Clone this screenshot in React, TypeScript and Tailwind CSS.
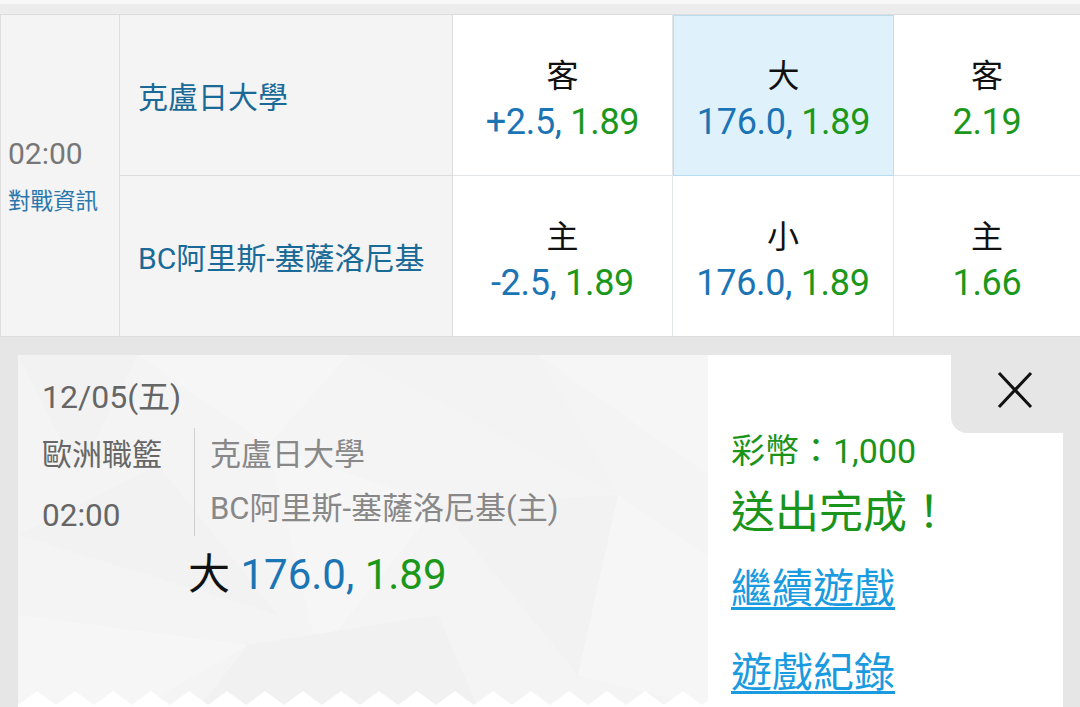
import React from "react";

const font = "font-['Roboto','Noto_Sans_CJK_TC',sans-serif]";

type Odd = { label: string; line?: string; price: string; active?: boolean };

const rows: { team: string; odds: Odd[] }[] = [
  {
    team: "克盧日大學",
    odds: [
      { label: "客", line: "+2.5,", price: "1.89" },
      { label: "大", line: "176.0,", price: "1.89", active: true },
      { label: "客", price: "2.19" },
    ],
  },
  {
    team: "BC阿里斯-塞薩洛尼基",
    odds: [
      { label: "主", line: "-2.5,", price: "1.89" },
      { label: "小", line: "176.0,", price: "1.89" },
      { label: "主", price: "1.66" },
    ],
  },
];

const OddCell: React.FC<{ odd: Odd; last: boolean; bottom: boolean }> = ({ odd, last, bottom }) => (
  <div
    className={`flex flex-col items-center justify-center pt-[9px] gap-[4px] ${
      odd.active ? "bg-[#dff2fc] border border-[#b9dcee]" : "bg-white"
    } ${!odd.active && !last ? "border-r border-[#e2e6e9]" : ""} ${
      !odd.active && bottom ? "border-b border-[#e2e6e9]" : ""
    }`}
  >
    <p className="text-[32px] leading-[40px] text-[#111]">{odd.label}</p>
    <p className="text-[36px] leading-[44px] tracking-[-0.3px]">
      {odd.line && <span className="text-[#1b74b4]">{odd.line} </span>}
      <span className="text-[#1b981b]">{odd.price}</span>
    </p>
  </div>
);

const Pattern = () => (
  <svg className="absolute inset-0 w-full h-full" viewBox="0 0 690 353" preserveAspectRatio="none">
    <polygon points="0,0 120,0 60,120" fill="#f2f2f2" />
    <polygon points="120,0 330,0 250,90" fill="#f6f6f6" />
    <polygon points="330,0 520,0 600,140" fill="#f3f3f3" />
    <polygon points="520,0 690,0 690,120" fill="#f6f6f6" />
    <polygon points="0,180 140,110 260,260" fill="#f2f2f2" />
    <polygon points="250,90 420,150 300,300" fill="#f6f6f6" />
    <polygon points="420,150 600,140 560,320" fill="#f2f2f2" />
    <polygon points="600,140 690,200 690,353 560,320" fill="#f6f6f6" />
    <polygon points="0,260 230,290 120,353 0,353" fill="#f6f6f6" />
    <polygon points="230,290 420,260 460,353 180,353" fill="#f1f1f1" />
  </svg>
);

const Zigzag = () => {
  const pts: string[] = ["0,17"];
  for (let x = 0; x <= 720; x += 38) {
    pts.push(`${x},14`, `${x + 19},0`);
  }
  pts.push("720,17");
  return (
    <svg className="absolute left-0 bottom-0 w-full h-[17px]" viewBox="0 0 690 17" preserveAspectRatio="none">
      <polygon points={pts.join(" ")} fill="#ffffff" />
    </svg>
  );
};

export default function App() {
  return (
    <div className={`w-[1080px] h-[707px] overflow-hidden bg-[#e6e6e6] ${font}`}>
      <div className="h-[4px] bg-[#f8f8f8]" />
      <div className="h-[11px] bg-[#ececec] border-b border-[#dcdcdc]" />

      <div className="grid grid-cols-[120px_333px_220px_221px_186px] grid-rows-[161px_160px] border-b border-[#dcdcdc]">
        <div className="row-span-2 bg-[#f4f4f4] border-r border-l border-[#dcdcdc] flex flex-col justify-center pl-[7px] gap-[14px]">
          <p className="text-[30px] leading-[36px] text-[#777]">02:00</p>
          <p className="text-[22.5px] leading-[30px] text-[#2a77ad]">對戰資訊</p>
        </div>
        {rows.map((r, ri) => (
          <React.Fragment key={ri}>
            <div
              className={`bg-[#f4f4f4] border-r border-[#dcdcdc] flex items-center pl-[18px] pt-[6px] ${
                ri === 0 ? "border-b" : ""
              }`}
            >
              <p className="text-[30px] leading-[40px] text-[#1a6a98]">{r.team}</p>
            </div>
            {r.odds.map((o, i) => (
              <OddCell key={i} odd={o} last={i === 2} bottom={ri === 0} />
            ))}
          </React.Fragment>
        ))}
      </div>

      <div className="pt-[18px] pl-[18px] pr-[17px]">
        <div className="flex h-[353px]">
          <div className="relative w-[690px] bg-[#f4f4f4] overflow-hidden">
            <Pattern />
            <Zigzag />
            <div className="relative pl-[24px] text-[31px] text-[#666]">
              <p className="mt-[22px] leading-[40px] text-[32px]">12/05(五)</p>
              <div className="flex mt-[11px]">
                <div className="w-[152px]">
                  <p className="leading-[54px] text-[30px]">歐洲職籃</p>
                  <p className="leading-[54px] mt-[7px] text-[31.5px]">02:00</p>
                </div>
                <div className="border-l border-[#cfcfcf] pl-[15px] self-start text-[#888]">
                  <p className="leading-[54px]">克盧日大學</p>
                  <p className="leading-[54px]">BC阿里斯-塞薩洛尼基(主)</p>
                </div>
              </div>
              <p className="mt-[8px] pl-[146px] text-[42px] leading-[48px]">
                <span className="text-[#111]">大</span>{" "}
                <span className="text-[#1b74b4]">176.0,</span>{" "}
                <span className="text-[#1b981b]">1.89</span>
              </p>
            </div>
          </div>

          <div className="flex-1 bg-white flex flex-col">
            <div className="flex justify-end">
              <div className="w-[112px] h-[78px] bg-[#e6e6e6] rounded-bl-[16px] pl-[46px] pt-[16px]">
                <svg width="36" height="38" viewBox="0 0 36 38">
                  <path d="M2 2 L34 36 M34 2 L2 36" stroke="#111" strokeWidth="3" fill="none" />
                </svg>
              </div>
            </div>
            <div className="pl-[23px]">
              <p className="text-[34px] leading-[36px] text-[#1b941b]">彩幣：1,000</p>
              <p className="mt-[18px] text-[44px] leading-[52px] text-[#1b941b]">送出完成！</p>
              <p className="mt-[24px] text-[41px] leading-[52px] text-[#1a9be0] underline decoration-[3px] underline-offset-[4px]">
                繼續遊戲
              </p>
              <p className="mt-[32px] text-[41px] leading-[52px] text-[#1a9be0] underline decoration-[3px] underline-offset-[4px]">
                遊戲紀錄
              </p>
            </div>
          </div>
        </div>
      </div>
    </div>
  );
}
